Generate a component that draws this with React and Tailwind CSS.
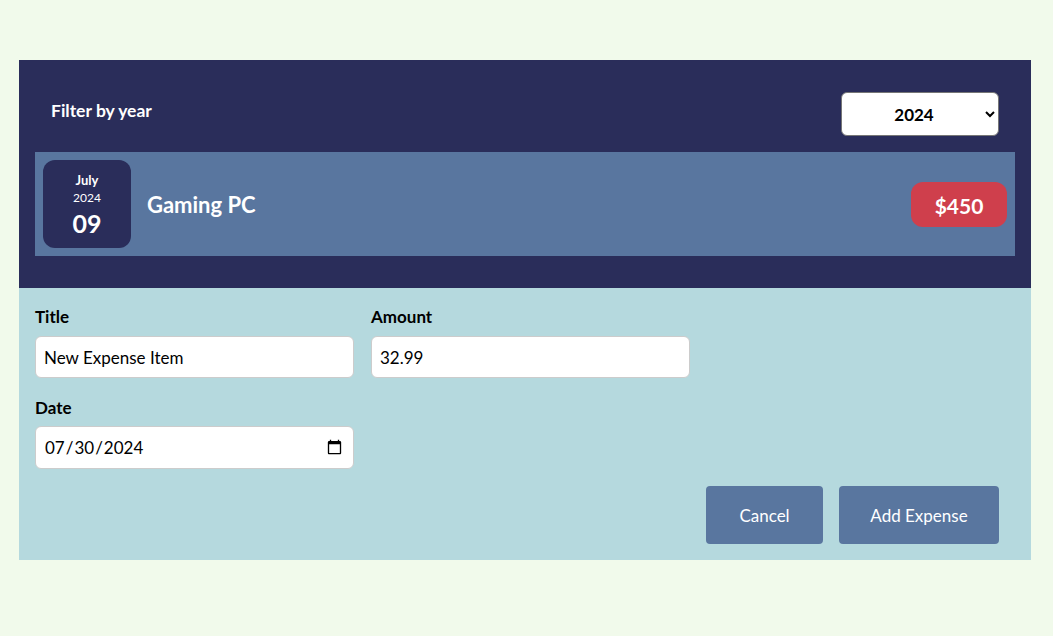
export default function App() {
  const font = { fontFamily: "Lato, 'Liberation Sans', sans-serif" };
  return (
    <div className="min-h-[636px] bg-[#f1faeb] pt-[60px] px-[19px]" style={font}>
      <div className="w-[1012px]">
        <div className="bg-[#2a2d5a] px-4 pt-4 pb-8">
          <div className="flex items-center justify-between px-4 py-4">
            <span className="text-white font-bold text-[17.5px] pb-[6px]">Filter by year</span>
            <select
              defaultValue="2024"
              className="w-[158px] h-[44px] bg-white rounded-[6px] border border-[#767676] text-black font-bold text-[17px] text-center px-2"
              style={font}
            >
              <option value="2022">2022</option>
              <option value="2023">2023</option>
              <option value="2024">2024</option>
            </select>
          </div>
          <div className="bg-[#59769f] p-2 flex items-center">
            <div className="w-[88px] h-[88px] bg-[#2a2d5a] rounded-xl flex flex-col items-center justify-center pt-[3px] text-white">
              <div className="font-bold text-[13px] leading-[17px]">July</div>
              <div className="text-[12px] leading-[17px]">2024</div>
              <div className="font-bold text-[25px] leading-[34px]">09</div>
            </div>
            <div className="ml-4 flex-1 text-white font-bold text-[22px] pt-px">Gaming PC</div>
            <div className="w-[96px] h-[45px] bg-[#cf3f4c] rounded-xl flex items-center justify-center pt-[3px] text-white font-bold text-[21px]">
              $450
            </div>
          </div>
        </div>
        <div className="bg-[#b5d9de] p-4">
          <div className="flex gap-[17px]">
            <div className="flex flex-col">
              <label className="font-bold text-[17px] leading-6 pt-px -mb-px text-black">Title</label>
              <input
                type="text"
                defaultValue="New Expense Item"
                className="mt-2 w-[319px] h-[42px] bg-white border border-[#cccccc] rounded-[6px] px-2 text-[17px] text-black"
                style={font}
              />
            </div>
            <div className="flex flex-col">
              <label className="font-bold text-[17px] leading-6 pt-px -mb-px text-black">Amount</label>
              <input
                type="text"
                defaultValue="32.99"
                className="mt-2 w-[319px] h-[42px] bg-white border border-[#cccccc] rounded-[6px] px-2 text-[17px] text-black"
                style={font}
              />
            </div>
          </div>
          <div className="flex flex-col mt-[17px]">
            <label className="font-bold text-[17px] leading-6 pt-px -mb-px text-black">Date</label>
            <input
              type="date"
              defaultValue="2024-07-30"
              className="mt-[7px] w-[319px] h-[43px] bg-white border border-[#cccccc] rounded-[6px] px-2 text-[17px] text-black"
              style={font}
            />
          </div>
          <div className="flex justify-end gap-4 mt-[17px] pr-4">
            <button className="h-[58px] w-[117px] bg-[#59769f] rounded text-white text-[17px] pt-px">Cancel</button>
            <button className="h-[58px] w-[160px] bg-[#59769f] rounded text-white text-[17px] pt-px">Add Expense</button>
          </div>
        </div>
      </div>
    </div>
  );
}
